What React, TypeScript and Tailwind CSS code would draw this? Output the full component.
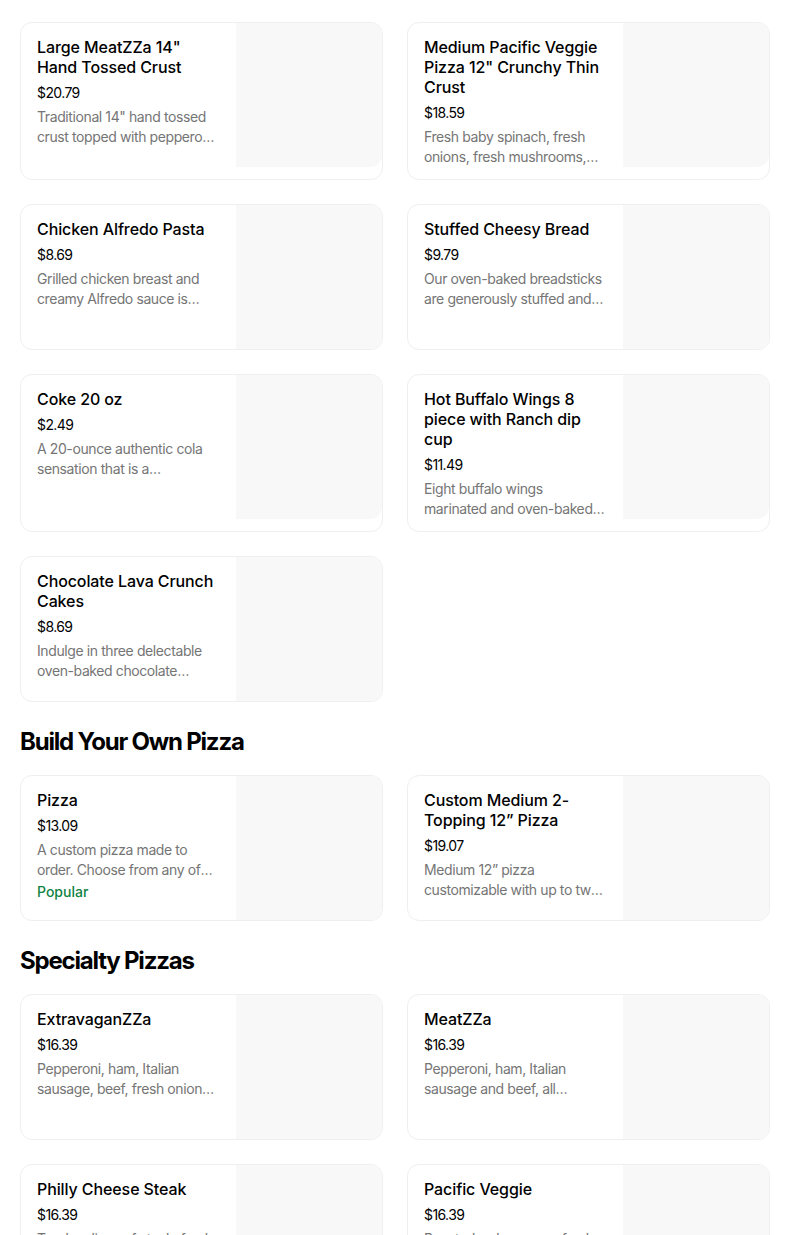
import React from "react";

type Item = { title: string; price: string; desc: string; popular?: boolean };

const top: Item[] = [
  { title: 'Large MeatZZa 14" Hand Tossed Crust', price: "$20.79", desc: 'Traditional 14" hand tossed crust topped with pepperoni, ham, Italian sausage and beef.' },
  { title: 'Medium Pacific Veggie Pizza 12" Crunchy Thin Crust', price: "$18.59", desc: "Fresh baby spinach, fresh onions, fresh mushrooms, tomatoes, black olives and roasted red peppers." },
  { title: "Chicken Alfredo Pasta", price: "$8.69", desc: "Grilled chicken breast and creamy Alfredo sauce is mixed with penne pasta and baked to perfection." },
  { title: "Stuffed Cheesy Bread", price: "$9.79", desc: "Our oven-baked breadsticks are generously stuffed and covered with a blend of 100% real mozzarella." },
  { title: "Coke 20 oz", price: "$2.49", desc: "A 20-ounce authentic cola sensation that is a celebration of refreshment." },
  { title: "Hot Buffalo Wings 8 piece with Ranch dip cup", price: "$11.49", desc: "Eight buffalo wings marinated and oven-baked, then smothered in hot buffalo sauce." },
  { title: "Chocolate Lava Crunch Cakes", price: "$8.69", desc: "Indulge in three delectable oven-baked chocolate indulgences with molten chocolate fudge on the inside." },
];

const byo: Item[] = [
  { title: "Pizza", price: "$13.09", desc: "A custom pizza made to order. Choose from any of our crusts, sauces and toppings.", popular: true },
  { title: "Custom Medium 2-Topping 12\u201d Pizza", price: "$19.07", desc: "Medium 12\u201d pizza customizable with up to two toppings of your choice." },
];

const specialty: Item[] = [
  { title: "ExtravaganZZa", price: "$16.39", desc: "Pepperoni, ham, Italian sausage, beef, fresh onions, fresh green peppers, fresh mushrooms and black olives." },
  { title: "MeatZZa", price: "$16.39", desc: "Pepperoni, ham, Italian sausage and beef, all sandwiched between two layers of cheese." },
  { title: "Philly Cheese Steak", price: "$16.39", desc: "Tender slices of steak, fresh onions, fresh green peppers, fresh mushrooms and provolone." },
  { title: "Pacific Veggie", price: "$16.39", desc: "Roasted red peppers, fresh baby spinach, fresh onions, fresh mushrooms and tomatoes." },
];

function Card({ item }: { item: Item }) {
  return (
    <div className="flex border border-[#efefef] rounded-xl overflow-hidden bg-white">
      <div className="flex-1 min-w-0 pl-4 pr-4 pt-[14px] pb-3">
        <div className="text-[16px] leading-5 font-medium text-black tracking-[-0.1px]">{item.title}</div>
        <div className="mt-[6px] text-[14px] leading-5 text-black tracking-[-0.6px]">{item.price}</div>
        <div className="mt-1 text-[14px] leading-5 text-[#757575] tracking-[-0.4px] line-clamp-2">{item.desc}</div>
        {item.popular && (
          <div className="mt-[2px] text-[14px] leading-5 font-medium text-[#0e8345]">Popular</div>
        )}
      </div>
      <div className="w-[146px] h-[144px] shrink-0 bg-[#f8f8f8] rounded-br-xl" />
    </div>
  );
}

function Grid({ items }: { items: Item[] }) {
  return (
    <div className="grid grid-cols-2 gap-x-6 gap-y-6">
      {items.map((it) => (
        <Card key={it.title} item={it} />
      ))}
    </div>
  );
}

function Heading({ children }: { children: React.ReactNode }) {
  return (
    <h2 className="mt-6 mb-[17px] text-[24px] leading-8 font-bold text-black tracking-[-1.2px]">{children}</h2>
  );
}

export default function App() {
  return (
    <div
      className="bg-white min-h-screen pt-[22px] pl-5 pr-[34px] pb-10"
      style={{ fontFamily: "Inter, 'Noto Sans', sans-serif" }}
    >
      <Grid items={top} />
      <Heading>Build Your Own Pizza</Heading>
      <Grid items={byo} />
      <Heading>Specialty Pizzas</Heading>
      <Grid items={specialty} />
    </div>
  );
}
